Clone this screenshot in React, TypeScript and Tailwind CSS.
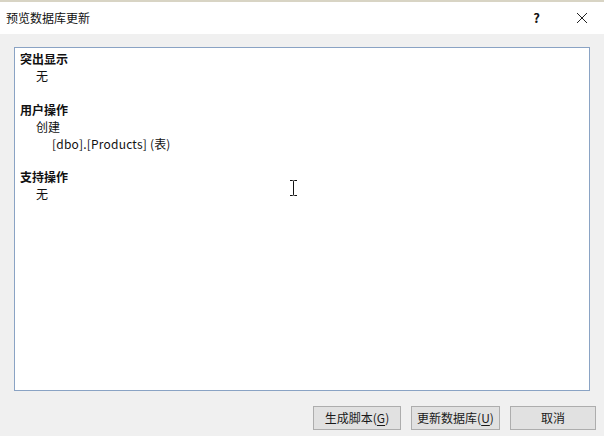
const font = { fontFamily: '"Noto Sans CJK SC", "Noto Sans", sans-serif' };

function Btn({ label, accel, w }: { label: string; accel?: string; w: string }) {
  return (
    <button className={`flex h-[24px] items-center justify-center border border-[#adadad] bg-[#e1e1e1] text-[12px] text-[#1a1a1a] ${w}`}>
      {label}
      {accel && (
        <>
          (<span className="underline underline-offset-2">{accel}</span>)
        </>
      )}
    </button>
  );
}

export default function App() {
  return (
    <div className="relative flex h-[436px] w-[604px] flex-col bg-[#f0f0f0]" style={font}>
      <div className="h-[2px] bg-[#d8d4c4]" />
      <div className="flex h-[32px] items-center bg-white pl-[6px] text-[12px] text-[#111]">
        <span className="flex-1">预览数据库更新</span>
        <span className="mr-[36px] text-[13px] font-bold">?</span>
        <svg width="12" height="12" viewBox="0 0 12 12" className="mr-[16px]">
          <path d="M1 1 L11 11 M11 1 L1 11" stroke="#222" strokeWidth="1" />
        </svg>
      </div>
      <div className="ml-[14px] mr-[14px] mt-[13px] h-[344px] border border-[#8aa3c4] bg-white px-[5px] pt-[3px] text-[12px] leading-[16.9px] text-[#111]">
        <div className="font-bold">突出显示</div>
        <div className="pl-[16px]">无</div>
        <div className="h-[16.9px]" />
        <div className="font-bold">用户操作</div>
        <div className="pl-[16px]">创建</div>
        <div className="pl-[32px] tracking-[0.2px]">[dbo].[Products] (表)</div>
        <div className="h-[16.9px]" />
        <div className="font-bold">支持操作</div>
        <div className="pl-[16px]">无</div>
      </div>
      <div className="mr-[8px] mt-[15px] flex justify-end gap-[10px]">
        <Btn label="生成脚本" accel="G" w="w-[88px]" />
        <Btn label="更新数据库" accel="U" w="w-[89px]" />
        <Btn label="取消" w="w-[86px]" />
      </div>
      <svg className="absolute left-[289px] top-[180px]" width="9" height="16" viewBox="0 0 9 16">
        <path d="M1 0.5 H3.5 Q4.5 0.5 4.5 1.5 V14.5 Q4.5 15.5 3.5 15.5 H1 M8 0.5 H5.5 Q4.5 0.5 4.5 1.5 M4.5 14.5 Q4.5 15.5 5.5 15.5 H8" stroke="#111" strokeWidth="1" fill="none" />
      </svg>
    </div>
  );
}
